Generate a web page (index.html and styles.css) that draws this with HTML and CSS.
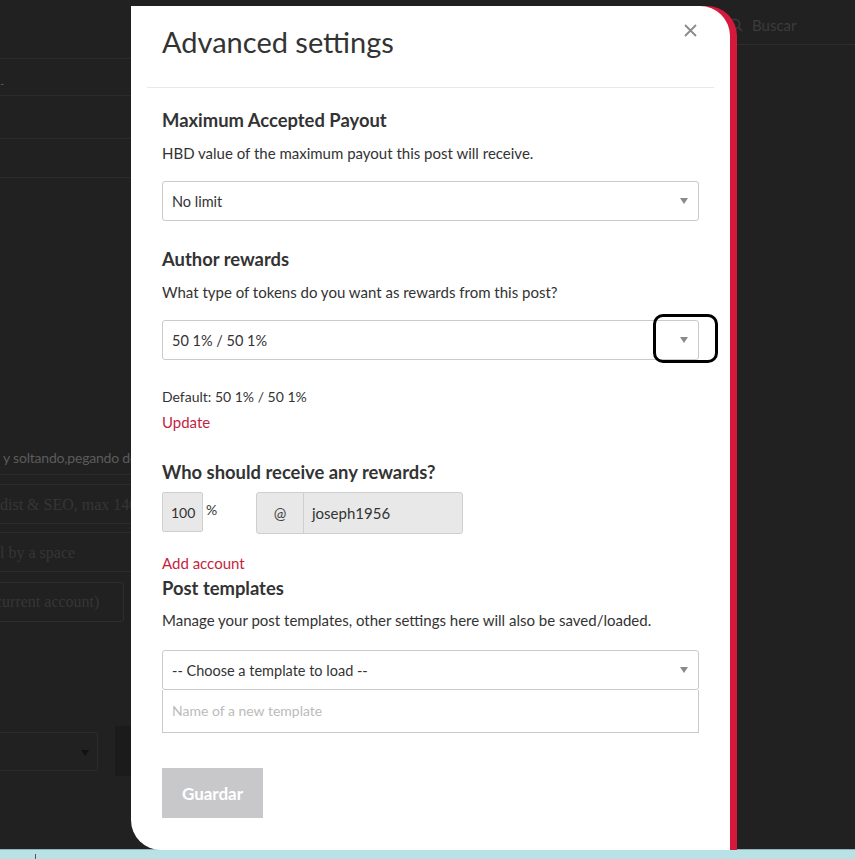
FILE: index.html
```html
<!DOCTYPE html>
<html lang="es">
<head>
  <meta charset="UTF-8" />
  <meta name="viewport" content="width=device-width, initial-scale=1.0"/>
  <title>Advanced settings</title>
  <link rel="stylesheet" href="styles.css">
</head>
<body>

  <div class="screen">
    <div class="page">
      <div class="topbar">
        <div class="search">
          <svg class="search-icon" width="14" height="14" viewBox="0 0 14 14"><circle cx="6" cy="6" r="4.6" fill="none" stroke="#3a3a3a" stroke-width="1.6"/><line x1="9.4" y1="9.4" x2="13" y2="13" stroke="#3a3a3a" stroke-width="1.6"/></svg>
          <span>Buscar</span>
        </div>
      </div>

      <div class="editor">
        <div class="bg-row r1"></div>
        <div class="bg-row r2"><span class="dash">-</span></div>
        <div class="bg-row r3"></div>
        <div class="bg-row r4"></div>
        <div class="bg-hint">y soltando,pegando desde el portapapeles</div>
        <div class="bg-input first">dist &amp; SEO, max 140 characters</div>
        <div class="bg-input">l by a space</div>
        <div class="bg-box">current account)</div>
        <div class="bg-actions">
          <div class="bg-select"><span class="bg-caret"></span></div>
          <div class="bg-button"></div>
        </div>
      </div>
    </div>
    <div class="taskbar"><span class="tick"></span></div>
  </div>

  <div class="modal">
    <header class="modal-header">
      <h2 class="modal-title">Advanced settings</h2>
      <svg class="close" width="13" height="13" viewBox="0 0 13 13"><path d="M1 1 L12 12 M12 1 L1 12" stroke="#8a8a8a" stroke-width="1.8" fill="none"/></svg>
    </header>

    <div class="modal-body">
      <section class="field">
        <h3 class="field-title">Maximum Accepted Payout</h3>
        <p class="field-note">HBD value of the maximum payout this post will receive.</p>
        <div class="select"><span>No limit</span><span class="caret"></span></div>
      </section>

      <section class="field">
        <h3 class="field-title">Author rewards</h3>
        <p class="field-note">What type of tokens do you want as rewards from this post?</p>
        <div class="select-wrap">
          <div class="select"><span>50 1% / 50 1%</span><span class="caret"></span></div>
          <span class="marker"></span>
        </div>
        <p class="default">Default: 50 1% / 50 1%</p>
        <a class="link update">Update</a>
      </section>

      <section class="field">
        <h3 class="field-title">Who should receive any rewards?</h3>
        <div class="beneficiary">
          <div class="percent">100</div>
          <span class="percent-sign">%</span>
          <div class="account">
            <span class="at">@</span>
            <span class="account-name">joseph1956</span>
          </div>
        </div>
        <a class="link add">Add account</a>
      </section>

      <section class="field templates">
        <h3 class="field-title">Post templates</h3>
        <p class="field-note wide">Manage your post templates, other settings here will also be saved/loaded.</p>
        <div class="select"><span>-- Choose a template to load --</span><span class="caret"></span></div>
        <div class="text-input">Name of a new template</div>
      </section>

      <button class="save">Guardar</button>
    </div>
  </div>

</body>
</html>
```

FILE: styles.css
```css
body {
  margin: 0;
  padding: 0;
  background: #212121;
  font-family: Lato, sans-serif;
  overflow: hidden;
}

.screen {
  display: flex;
  flex-direction: column;
  height: 859px;
}

.page {
  flex: 1;
  overflow: hidden;
}

.topbar {
  height: 45px;
  display: flex;
  justify-content: flex-end;
}

.search {
  width: 118px;
  display: flex;
  align-items: center;
  gap: 9px;
  padding-top: 5px;
  border-bottom: 1px solid #2c2c2c;
  color: #3c3c3c;
  font-size: 15px;
  box-sizing: border-box;
}

.search-icon {
  margin-left: -8px;
}

.editor {
  width: 700px;
}

.bg-row {
  border-bottom: 1px solid #2b2b2b;
  box-sizing: border-box;
}

.r1 { height: 14px; }
.r2 { height: 37px; position: relative; }
.r3 { height: 43px; }
.r4 { height: 39px; }

.dash {
  position: absolute;
  left: 0;
  top: 19px;
  color: #555;
  font-size: 12px;
  line-height: 12px;
}

.bg-hint {
  margin-top: 263px;
  height: 33px;
  line-height: 34px;
  padding-left: 3px;
  color: #5c5c5c;
  font-size: 14px;
  letter-spacing: -0.2px;
  border-bottom: 1px solid #2b2b2b;
}

.bg-input {
  height: 40px;
  margin-top: 8px;
  border-top: 1px solid #2b2b2b;
  border-bottom: 1px solid #2b2b2b;
  line-height: 40px;
  font-family: "Liberation Serif", serif;
  font-size: 16px;
  color: #363636;
  box-sizing: border-box;
  white-space: nowrap;
}

.bg-input.first {
  margin-top: 9px;
}

.bg-box {
  width: 124px;
  height: 40px;
  margin-top: 10px;
  border: 1px solid #2e2e2e;
  border-left: none;
  border-radius: 0 3px 3px 0;
  line-height: 38px;
  text-indent: -5px;
  font-family: "Liberation Serif", serif;
  font-size: 16px;
  color: #363636;
  box-sizing: border-box;
  white-space: nowrap;
  overflow: hidden;
}

.bg-actions {
  margin-top: 104px;
  display: flex;
  align-items: center;
  gap: 17px;
}

.bg-select {
  width: 98px;
  height: 39px;
  border: 1px solid #2c2c2c;
  border-left: none;
  border-radius: 0 3px 3px 0;
  box-sizing: border-box;
  position: relative;
}

.bg-caret {
  position: absolute;
  right: 8px;
  top: 17px;
  border-left: 4px solid transparent;
  border-right: 4px solid transparent;
  border-top: 6px solid #121212;
}

.bg-button {
  width: 60px;
  height: 50px;
  background: #1b1b1b;
}

.taskbar {
  height: 9px;
  background: #b9e2e6;
  border-top: 1px solid #8fb3b6;
  position: relative;
}

.tick {
  position: absolute;
  left: 35px;
  top: 4px;
  width: 1px;
  height: 5px;
  background: #555;
}

/* modal */
.modal {
  position: absolute;
  left: 131px;
  top: 6px;
  width: 599px;
  height: 844px;
  background: #fff;
  border-radius: 0 30px 0 30px;
  box-shadow: 7px 0 0 #d4193d;
  padding: 0 16px;
  box-sizing: border-box;
  color: #333;
}

.modal-header {
  height: 81px;
  padding: 0 15px;
  border-bottom: 1px solid #e8e8e8;
  display: flex;
  justify-content: space-between;
  align-items: flex-start;
}

.modal-title {
  margin: 0;
  padding-top: 19px;
  font-size: 29px;
  font-weight: 400;
  line-height: 34px;
  color: #333;
}

.close {
  margin-top: 18px;
  margin-right: 2px;
}

.modal-body {
  padding: 0 15px;
}

.field-title {
  margin: 26px 0 0;
  font-size: 18.4px;
  font-weight: 700;
  line-height: 24px;
}

.field:first-child .field-title {
  margin-top: 20px;
}

.field-note {
  margin: 11px 0 18px;
  font-size: 15px;
  line-height: 20px;
}

.select {
  height: 40px;
  padding: 0 10px 0 9px;
  border: 1px solid #cacaca;
  border-radius: 3px;
  display: flex;
  align-items: center;
  justify-content: space-between;
  font-size: 14.5px;
  box-sizing: border-box;
}

.caret {
  border-left: 4px solid transparent;
  border-right: 4px solid transparent;
  border-top: 6px solid #8a8a8a;
}

.select-wrap {
  position: relative;
}

.marker {
  position: absolute;
  left: 491px;
  top: -6px;
  width: 65px;
  height: 49px;
  border: 3px solid #000;
  border-radius: 10px;
  box-sizing: border-box;
}

.default {
  margin: 27px 0 0;
  font-size: 14px;
  line-height: 20px;
}

.link {
  display: block;
  color: #c41f3e;
  font-size: 15px;
  line-height: 20px;
}

.update {
  margin-top: 5px;
}

.field:nth-child(3) .field-title {
  margin-top: 28px;
}

.beneficiary {
  margin-top: 8px;
  display: flex;
  align-items: flex-start;
}

.percent {
  width: 41px;
  height: 40px;
  padding-left: 8px;
  background: #e8e8e8;
  border: 1px solid #cfcfcf;
  border-radius: 2px;
  line-height: 40px;
  font-size: 14px;
  box-sizing: border-box;
}

.percent-sign {
  margin: 9px 0 0 3px;
  width: 50px;
  font-size: 14px;
}

.account {
  width: 207px;
  height: 42px;
  display: flex;
  border: 1px solid #cfcfcf;
  border-radius: 3px;
  background: #e8e8e8;
  box-sizing: border-box;
  font-size: 15px;
  line-height: 40px;
}

.at {
  width: 46px;
  text-align: center;
  border-right: 1px solid #cfcfcf;
  color: #444;
}

.account-name {
  padding-left: 8px;
}

.add {
  margin-top: 19px;
}

.templates .field-title {
  margin-top: 3px;
}

.templates .field-note {
  margin: 10px 0 20px;
}

.text-input {
  height: 43px;
  padding-left: 9px;
  border: 1px solid #cacaca;
  border-top: none;
  line-height: 42px;
  font-size: 14px;
  color: #bbb;
  box-sizing: border-box;
}

.save {
  margin-top: 35px;
  width: 101px;
  height: 50px;
  border: none;
  background: #c8c8ca;
  color: #fff;
  font-family: Lato, sans-serif;
  font-size: 17px;
  font-weight: 700;
}
```
